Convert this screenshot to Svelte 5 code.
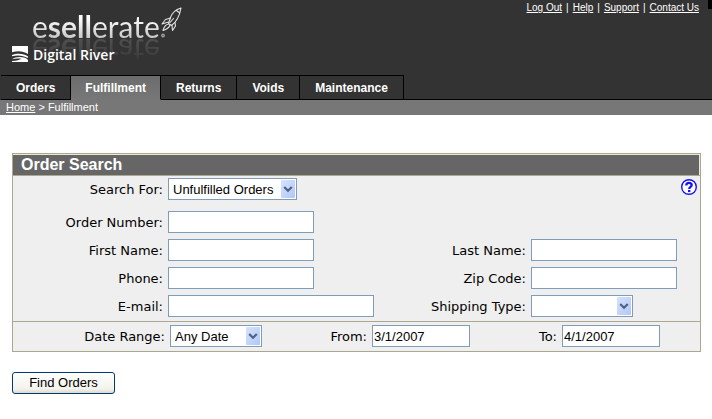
<script>
  const links = ['Log Out', 'Help', 'Support', 'Contact Us'];
  const tabs = ['Orders', 'Fulfillment', 'Returns', 'Voids', 'Maintenance'];
  let active = $state('Fulfillment');
  let from = $state('3/1/2007');
  let to = $state('4/1/2007');
</script>

{#snippet textField(id, label, size)}
  <div class="field">
    <label for={id}>{label}:</label>
    <input {id} type="text" class={size} />
  </div>
{/snippet}

{#snippet arrow()}
  <svg class="arrow" viewBox="0 0 14 18" aria-hidden="true">
    <defs>
      <linearGradient id="arrow-fill" x1="0" y1="0" x2="1" y2="1">
        <stop offset="0" stop-color="#d6e2fd" />
        <stop offset="1" stop-color="#b0c8f6" />
      </linearGradient>
    </defs>
    <rect width="14" height="18" rx="1" fill="url(#arrow-fill)" />
    <path d="M3.2 7 7 10.8 10.8 7" fill="none" stroke="#4d6185" stroke-width="2.2" />
  </svg>
{/snippet}

<header>
  <div class="masthead">
    <div class="brand">
      <div class="wordmark">
        <span class="name">e<b>sell</b>erate</span>
        <svg class="rocket" viewBox="0 0 24 32" aria-hidden="true">
          <g fill="none" stroke="#e4e4e4" stroke-width="1.1" stroke-linejoin="round" stroke-linecap="round">
            <path d="M21 1C16 2.500 12 6 10.500 10.500L8.500 16.500 11.500 18.500C16.500 15 19.500 9 21 1Z" />
            <path d="M16.500 3.500 19.800 6M10.500 11 5.500 12.500 2 17 8.500 15M15 15.500 15.500 19 12.500 23.500 12 18.500M10 15.500 13.500 11.500" />
            <path d="M8.500 17C5.500 17.500 4 20 3 23.500 6.500 22.500 9 21 10 18" />
          </g>
          <circle cx="3" cy="28.500" r="1.500" fill="#777" stroke="#bbb" stroke-width=".8" />
        </svg>
      </div>
      <div class="river">
        <svg viewBox="0 0 16 16" aria-hidden="true">
          <path fill="#fff" d="M0 0H16V8C11 4.800 6 4.600 0 6.200ZM0 9C5 6.800 12 7.200 16 10.500V12C11 9.200 6 8.800 0 10.200ZM0 13.200C3 11 8 10.600 12 11.600 14 12.200 15 13 16 14V16H0V15C5 14.800 7.500 14 9.500 12.800 6 12.200 3 12.500 0 13.200Z" />
        </svg>
        <span>Digital River</span>
      </div>
    </div>
    <nav class="links" aria-label="Account">
      {#each links as link, i}
        {#if i}<span>|</span>{/if}
        <a href="#top">{link}</a>
      {/each}
    </nav>
    <div class="corner"></div>
  </div>
  <nav class="tabs" aria-label="Sections">
    {#each tabs as tab}
      <button type="button" class:active={tab === active} onclick={() => (active = tab)}>{tab}</button>
    {/each}
    <div class="rest"></div>
  </nav>
  <div class="crumbs"><a href="#home">Home</a> &gt; Fulfillment</div>
</header>

<main>
  <form onsubmit={(e) => e.preventDefault()}>
    <section class="panel">
      <h1>Order Search</h1>
      <div class="search">
        <div class="field">
          <label for="search-for">Search For:</label>
          <span class="select kind">
            <select id="search-for"><option>Unfulfilled Orders</option><option>All Orders</option></select>
            {@render arrow()}
          </span>
        </div>
        <button type="button" class="help" aria-label="Help">
          <svg viewBox="0 0 18 18" aria-hidden="true">
            <circle cx="9" cy="9" r="7.300" fill="#fff" stroke="#1414f0" stroke-width="1.400" />
            <path d="M6.300 7.400C6.300 4.200 11.700 4.200 11.700 7 11.700 8.800 9.200 8.900 9.200 10.900" fill="none" stroke="#1414f0" stroke-width="2.300" />
            <path d="M8 12H10.400V14.100H8Z" fill="#1414f0" />
          </svg>
        </button>
      </div>
      <div class="fields">
        <div class="wide">{@render textField('order-number', 'Order Number', 'medium')}</div>
        {@render textField('first-name', 'First Name', 'medium')}
        {@render textField('last-name', 'Last Name', 'medium')}
        {@render textField('phone', 'Phone', 'medium')}
        {@render textField('zip', 'Zip Code', 'medium')}
        {@render textField('email', 'E-mail', 'long')}
        <div class="field">
          <label for="shipping">Shipping Type:</label>
          <span class="select ship">
            <select id="shipping"><option></option><option>Ground</option></select>
            {@render arrow()}
          </span>
        </div>
      </div>
      <div class="dates">
        <div class="field">
          <label for="range">Date Range:</label>
          <span class="select range">
            <select id="range"><option>Any Date</option><option>Today</option></select>
            {@render arrow()}
          </span>
        </div>
        <div class="field">
          <label for="from">From:</label>
          <input id="from" type="text" class="short" bind:value={from} />
        </div>
        <div class="field">
          <label for="to">To:</label>
          <input id="to" type="text" class="short" bind:value={to} />
        </div>
      </div>
    </section>
    <button class="submit" type="submit">Find Orders</button>
  </form>
</main>

<style>
  :global(body) {
    background: #fff;
    color: #000;
    font: 13px/16px 'DejaVu Sans', Verdana, sans-serif;
  }
  * { box-sizing: border-box; }
  header { background: #333; color: #fff; }
  .masthead { display: flex; height: 75px; position: relative; }
  .brand { flex: 1; padding: 7px 0 0 12px; }
  .wordmark { display: flex; height: 39px; padding-left: 20px; }
  .name {
    height: 38px;
    font: 30px/38px Lato, 'Open Sans', sans-serif;
    color: transparent;
    background: linear-gradient(#fff 30%, #c4c4c4 85%);
    background-clip: text;
    -webkit-box-reflect: below -13px linear-gradient(transparent 20%, rgba(255, 255, 255, 0.25));
  }
  .name b { font-weight: 700; }
  .rocket { width: 24px; height: 32px; }
  .river {
    position: relative;
    display: flex;
    gap: 5px;
    font: 600 14px/18px 'Open Sans', sans-serif;
  }
  .river svg { width: 16px; height: 16px; }
  .links {
    display: flex;
    gap: 4px;
    padding: 2px 13px 0 0;
    font: 10px/12px 'Liberation Sans', Arial, sans-serif;
  }
  a { color: inherit; }
  .corner { position: absolute; top: 0; right: 0; width: 4px; height: 9px; background: #000; }
  .tabs { display: flex; height: 25px; padding-left: 1px; }
  .tabs button {
    padding: 0 15px;
    border: 1px solid #000;
    border-left: 0;
    background: #333;
    color: #fff;
    font: bold 12px/22px 'Liberation Sans', Arial, sans-serif;
  }
  .tabs button.active { padding: 0 14px; background: linear-gradient(#6c6c6c, #777); border-bottom-color: #777; }
  .rest { flex: 1; border-bottom: 1px solid #000; }
  .crumbs {
    height: 15px;
    padding-left: 6px;
    background: #777;
    font: 11px/15px 'Liberation Sans', Arial, sans-serif;
  }
  main { padding: 38px 11px 0 12px; }
  .panel { border: 1px solid #aca88f; background: #efefef; }
  h1 {
    margin: 0;
    padding-left: 8px;
    border: 1px solid #ece9d8;
    border-width: 1px 1px 0 0;
    background: #666;
    color: #fff;
    font: bold 16px/20px 'Liberation Sans', Arial, sans-serif;
  }
  .search {
    display: flex;
    justify-content: space-between;
    border-top: 1px solid #aca88f;
    padding: 2px 2px 0 0;
  }
  .fields {
    display: grid;
    grid-template-columns: 363fr 324fr;
    row-gap: 6px;
    padding: 11px 0 4px;
  }
  .wide { grid-column: 1 / -1; }
  .dates {
    display: grid;
    grid-template-columns: 275fr 190fr 222fr;
    border-top: 1px solid #aca88f;
    padding: 3px 0 4px;
  }
  .field { display: flex; align-items: center; gap: 5px; }
  label { width: 150px; padding-top: 2px; text-align: right; white-space: nowrap; }
  .dates label { width: 79px; }
  .dates .field:first-child label { width: 152px; }
  input, select {
    height: 22px;
    margin: 0;
    border: 1px solid #7f9db9;
    border-radius: 0;
    background: #fff;
    color: #000;
    font: 13px/18px 'Liberation Sans', Arial, sans-serif;
  }
  input { padding: 0 1px; }
  select { appearance: none; width: 100%; padding: 1px 4px 0; }
  .medium { width: 146px; }
  .long { width: 206px; }
  .short { width: 98px; }
  .select { position: relative; display: flex; }
  .kind { width: 129px; }
  .ship { width: 102px; }
  .range { width: 92px; }
  .arrow { position: absolute; top: 2px; right: 2px; width: 14px; height: 18px; pointer-events: none; }
  .help { width: 18px; height: 18px; padding: 0; border: 0; background: none; }
  .help svg { display: block; width: 18px; height: 18px; }
  .submit {
    display: block;
    width: 103px;
    height: 22px;
    margin-top: 20px;
    padding: 0;
    border: 1px solid #003c74;
    border-radius: 3px;
    background: linear-gradient(#fff, #f3f2ec 80%, #dcd8cd);
    color: #000;
    font: 13px/18px 'Liberation Sans', Arial, sans-serif;
  }
</style>
